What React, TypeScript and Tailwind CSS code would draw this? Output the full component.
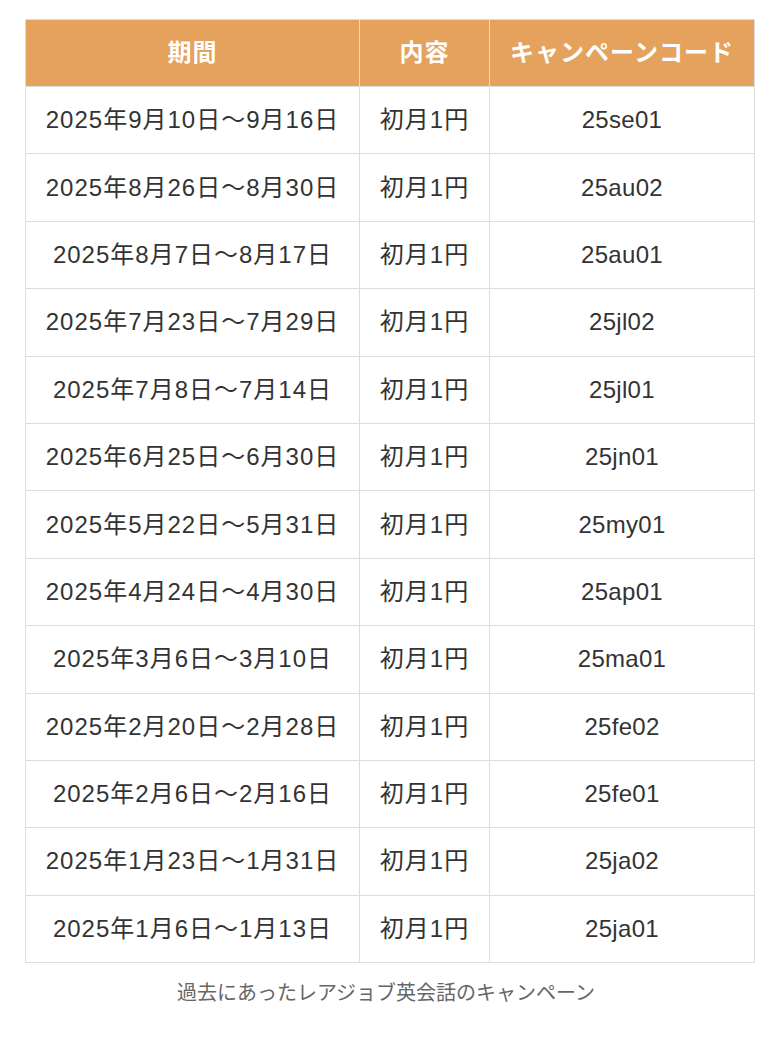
const rows: readonly [string, string, string][] = [
  ['2025年9月10日〜9月16日', '初月1円', '25se01'],
  ['2025年8月26日〜8月30日', '初月1円', '25au02'],
  ['2025年8月7日〜8月17日', '初月1円', '25au01'],
  ['2025年7月23日〜7月29日', '初月1円', '25jl02'],
  ['2025年7月8日〜7月14日', '初月1円', '25jl01'],
  ['2025年6月25日〜6月30日', '初月1円', '25jn01'],
  ['2025年5月22日〜5月31日', '初月1円', '25my01'],
  ['2025年4月24日〜4月30日', '初月1円', '25ap01'],
  ['2025年3月6日〜3月10日', '初月1円', '25ma01'],
  ['2025年2月20日〜2月28日', '初月1円', '25fe02'],
  ['2025年2月6日〜2月16日', '初月1円', '25fe01'],
  ['2025年1月23日〜1月31日', '初月1円', '25ja02'],
  ['2025年1月6日〜1月13日', '初月1円', '25ja01'],
]

export default function App() {
  return (
    <div className="min-h-[1040px] bg-white pt-[19px] font-['Liberation_Sans','Noto_Sans_CJK_JP',sans-serif] text-[#333]">
      <table className="ml-[25px] w-[729px] table-fixed border-collapse text-[24px] tracking-[1px]">
        <colgroup>
          <col className="w-[334px]" />
          <col className="w-[130px]" />
          <col className="w-[265px]" />
        </colgroup>
        <thead>
          <tr className="h-[67px] bg-[#e5a25d] text-white">
            <th className="border border-[#ddd] font-bold">期間</th>
            <th className="border border-[#ddd] font-bold">内容</th>
            <th className="border border-[#ddd] font-bold">キャンペーンコード</th>
          </tr>
        </thead>
        <tbody>
          {rows.map(([period, content, code]) => (
            <tr key={code} className="h-[67.4px]">
              <td className="border border-[#ddd] text-center">{period}</td>
              <td className="border border-[#ddd] text-center">{content}</td>
              <td className="border border-[#ddd] text-center tracking-[0.3px]">{code}</td>
            </tr>
          ))}
        </tbody>
      </table>
      <p className="mt-[16px] text-center text-[20px] leading-[28px] text-[#666]">
        過去にあったレアジョブ英会話のキャンペーン
      </p>
    </div>
  )
}
